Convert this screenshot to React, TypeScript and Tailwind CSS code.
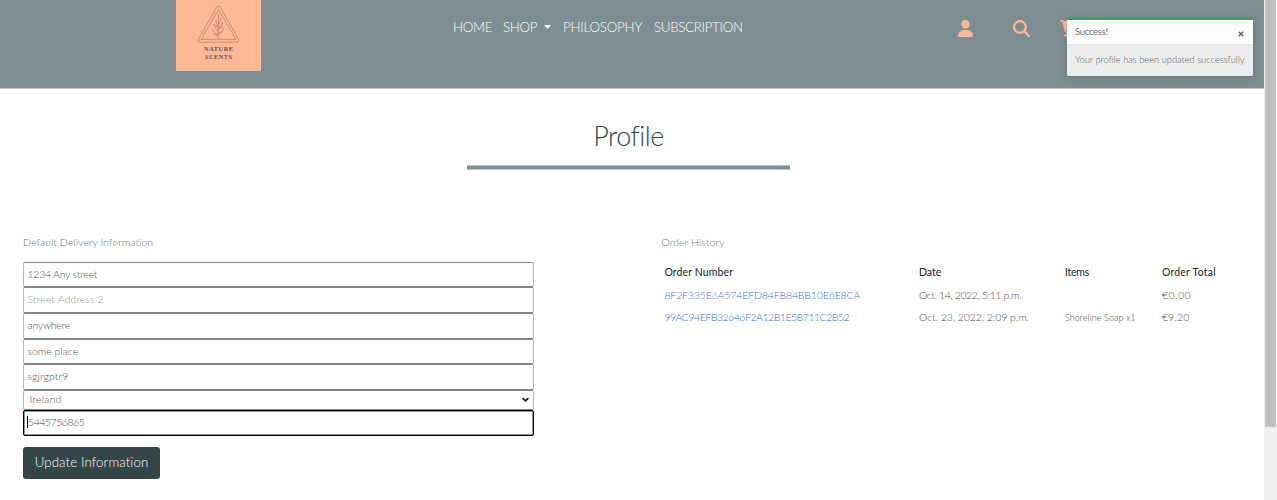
import type { ReactNode } from "react";

function Logo() {
  return (
    <svg className="ml-[176px] h-[71px] w-[85px] shrink-0" viewBox="0 0 85 71">
      <rect width="85" height="71" fill="#ffb896" />
      <g fill="none" stroke="#94776a" strokeWidth="0.6" strokeLinejoin="round">
        <path d="M41 6.500h3L63 40.200l-1 2H23l-1-2z" />
        <path d="M42.500 9.500 60 39.400H25z" />
      </g>
      <g fill="none" stroke="#b07a68" strokeWidth="0.750" strokeLinecap="round">
        <path d="M42 38.500c0-8 .8-16 .3-24.500" />
        <path d="M42 35c-3-1-5-3-5.500-6M42.200 31c-2.500-1.500-4-3.500-4.200-6M42.500 26c-2-1.500-2.500-3.500-2.500-6M42 34.500c3-1 4.500-3 5.500-6.500M42.300 29.500c2.500-1.500 4-4 4.500-7M42.500 24c1.500-1.500 2.300-4 2.300-6M41.800 36l-4.500-2M42 33l4-1M42.300 27.500l-4.500-3M42.500 28l3.500-1.500" />
      </g>
      <g fill="#5b5350" fontFamily="Liberation Serif, serif" fontWeight="700" fontSize="6.200" textAnchor="middle">
        <text x="42.500" y="51" textLength="29">NATURE</text>
        <text x="42.500" y="59.300" textLength="27">SCENTS</text>
      </g>
    </svg>
  );
}

function Field({ children, className }: { children: ReactNode; className: string }) {
  return (
    <div className={`flex items-center rounded-[2px] border border-[#858585] border-x-[#b5b5b5] pb-px leading-none ${className}`}>
      {children}
    </div>
  );
}

function Toast() {
  return (
    <div className="absolute left-[1067px] top-[18px] h-[58px] w-[186px] rounded-b-[2px] border-t-2 border-[#3f9f58] bg-[#ebedef] shadow-[0_2px_8px_rgba(0,0,0,0.18)]">
      <div className="flex h-6 items-center justify-between bg-[#fdfdfd] pl-2 pr-[9px]">
        <span className="text-[9.500px] font-normal tracking-[-0.300px] text-[#6c757d]">Success!</span>
        <svg className="mt-[3px] size-[6px]" viewBox="0 0 6 6" stroke="#606060" strokeWidth="1.300"><path d="m.7.700 4.600 4.600M5.300.700.700 5.300" /></svg>
      </div>
      <div className="flex h-[31px] items-center whitespace-nowrap border-t border-[#e4e6e8] pl-2 text-[9.300px] text-[#5c6063]">
        Your profile has been updated successfully
      </div>
    </div>
  );
}

export default function App() {
  return (
    <div className="relative flex h-[500px] w-[1277px] overflow-hidden bg-white font-['Lato',sans-serif] text-[10.500px] font-light text-[#505050]">
      <div className="w-[1264px] shrink-0">
        <header className="flex h-[89px] items-start border-b border-[#bfc8ca] bg-[#7d8e93]">
          <Logo />
          <nav className="ml-[192px] flex h-[55px] w-[291px] items-center whitespace-nowrap text-[13.300px] text-white">
            <span className="w-[50px] tracking-[-0.300px]">HOME</span>
            <span className="w-[41px] tracking-[-0.350px]">SHOP</span>
            <svg className="mr-[12px] mb-[2px] h-[4px] w-[7px] shrink-0" viewBox="0 0 7 4"><path d="M0 0h7L3.500 4z" fill="#fff" /></svg>
            <span className="w-[91px] shrink-0 tracking-[-0.200px]">PHILOSOPHY</span>
            <span className="tracking-[-0.300px]">SUBSCRIPTION</span>
          </nav>
          <svg className="ml-[214px] mt-[20px] h-[17px] w-[15px] shrink-0" viewBox="0 0 448 512" fill="#ffb896"><path d="M224 256A128 128 0 1 0 224 0a128 128 0 1 0 0 256zm-45.700 48C79.800 304 0 383.800 0 482.300 0 498.700 13.300 512 29.700 512h388.600c16.400 0 29.700-13.300 29.700-29.700C448 383.800 368.200 304 269.700 304z" /></svg>
          <svg className="ml-[40px] mt-[20px] size-[17px] shrink-0" viewBox="0 0 512 512" fill="#ffb896"><path d="M416 208c0 45.900-14.900 88.300-40 122.700l126.600 126.700c12.500 12.500 12.500 32.800 0 45.300s-32.800 12.500-45.300 0L330.700 376C296.300 401.200 253.900 416 208 416 93.100 416 0 322.900 0 208S93.100 0 208 0s208 93.100 208 208zM208 352a144 144 0 1 0 0-288 144 144 0 1 0 0 288z" /></svg>
          <svg className="ml-[30px] mt-[20px] h-[17px] w-[19px] shrink-0" viewBox="0 0 576 512" fill="#ffb896"><path d="M0 24C0 10.700 10.700 0 24 0h45.500c22 0 41.500 12.800 50.600 32h411c26.300 0 45.500 25 38.600 50.400l-41 152.300c-8.500 31.400-37 53.300-69.500 53.300H170.700l5.400 28.500c2.200 11.300 12.100 19.500 23.600 19.500H488c13.300 0 24 10.700 24 24s-10.700 24-24 24H199.700c-34.600 0-64.300-24.600-70.700-58.500L77.400 54.500c-.7-3.800-4-6.500-7.900-6.500H24C10.700 48 0 37.300 0 24zm128 440a48 48 0 1 1 96 0 48 48 0 1 1-96 0zm336-48a48 48 0 1 1 0 96 48 48 0 1 1 0-96z" /></svg>
        </header>

        <div className="flex w-[1257px] flex-col items-center pt-[27px]">
          <h1 className="text-[27px] leading-[40px] tracking-[-0.500px] text-[#344547]">Profile</h1>
          <hr className="mt-[9px] h-[5px] w-[323px] border-0 border-y border-[#b9c3c5] bg-[#7d8e93]" />
        </div>

        <main className="flex whitespace-nowrap pl-[23px] pt-[63px]">
          <section className="w-[638.400px]">
            <h2 className="h-[29px] leading-[19px] tracking-[0.040px] text-[#66757f]">Default Delivery Information</h2>
            <form className="w-[510.500px]">
              <Field className="h-[25px] pl-[3.500px] tracking-[-0.250px]">1234 Any street</Field>
              <Field className="h-[26px] pl-[3.500px] tracking-[0.100px] text-[#8795a1]">Street Address 2</Field>
              <Field className="h-[26px] pl-[3.500px] tracking-[-0.200px]">anywhere</Field>
              <Field className="h-[25px] pl-[3.500px]">some place</Field>
              <Field className="h-[26px] pl-[3.500px] tracking-[0.100px]">sgjrgptr9</Field>
              <Field className="h-[20px] justify-between pl-[5.500px] pr-[4px] tracking-[0.200px]">
                Ireland
                <svg className="size-[7px]" viewBox="0 0 7 7" fill="none" stroke="#111" strokeWidth="1.700"><path d="m.6 2.200 2.900 2.600 2.900-2.600" /></svg>
              </Field>
              <div className="flex h-[26px] items-center rounded-[2px] border-[1.500px] border-black pb-[2px] pl-[3px] leading-none tracking-[-0.450px] shadow-[inset_0_0_0_0.500px_#333]">
                <span className="h-[12px] w-px bg-black" />
                5445756865
              </div>
              <button type="button" className="mt-[11px] flex h-[32px] w-[137px] items-center justify-center rounded-[3px] bg-[#344547] text-[13.300px] tracking-[0.100px] text-white">Update Information</button>
            </form>
          </section>
          <section>
            <h2 className="h-[29px] leading-[19px] tracking-[0.060px] text-[#707579]">Order History</h2>
            <div className="grid grid-cols-[254.500px_146px_97px_90px] grid-rows-[22px_23px_22px] items-center pl-[3px]">
              <span className="font-normal tracking-[0.130px] text-[#212529]">Order Number</span>
              <span className="font-normal text-[#212529]">Date</span>
              <span className="font-normal tracking-[-0.200px] text-[#212529]">Items</span>
              <span className="font-normal tracking-[0.220px] text-[#212529]">Order Total</span>
              <a className="tracking-[-0.140px] text-[#2f73f5]">8F2F335E6A574EFD84FB84BB10E6E8CA</a>
              <span className="tracking-[-0.400px]">Oct. 14, 2022, 5:11 p.m.</span>
              <span />
              <span className="tracking-[0.500px]">€0.00</span>
              <a className="tracking-[-0.480px] text-[#2f73f5]">99AC94EFB32646F2A12B1E5B711C2B52</a>
              <span className="tracking-[-0.070px]">Oct. 23, 2022, 2:09 p.m.</span>
              <span className="text-[9px] tracking-[0.080px]">Shoreline Soap x1</span>
              <span className="tracking-[0.140px]">€9.20</span>
            </div>
          </section>
        </main>
      </div>
      <div className="h-full w-[13px] bg-[#f0f0f0] px-px">
        <div className="h-[427px] bg-[#c1c1c1]" />
      </div>
      <Toast />
    </div>
  );
}
